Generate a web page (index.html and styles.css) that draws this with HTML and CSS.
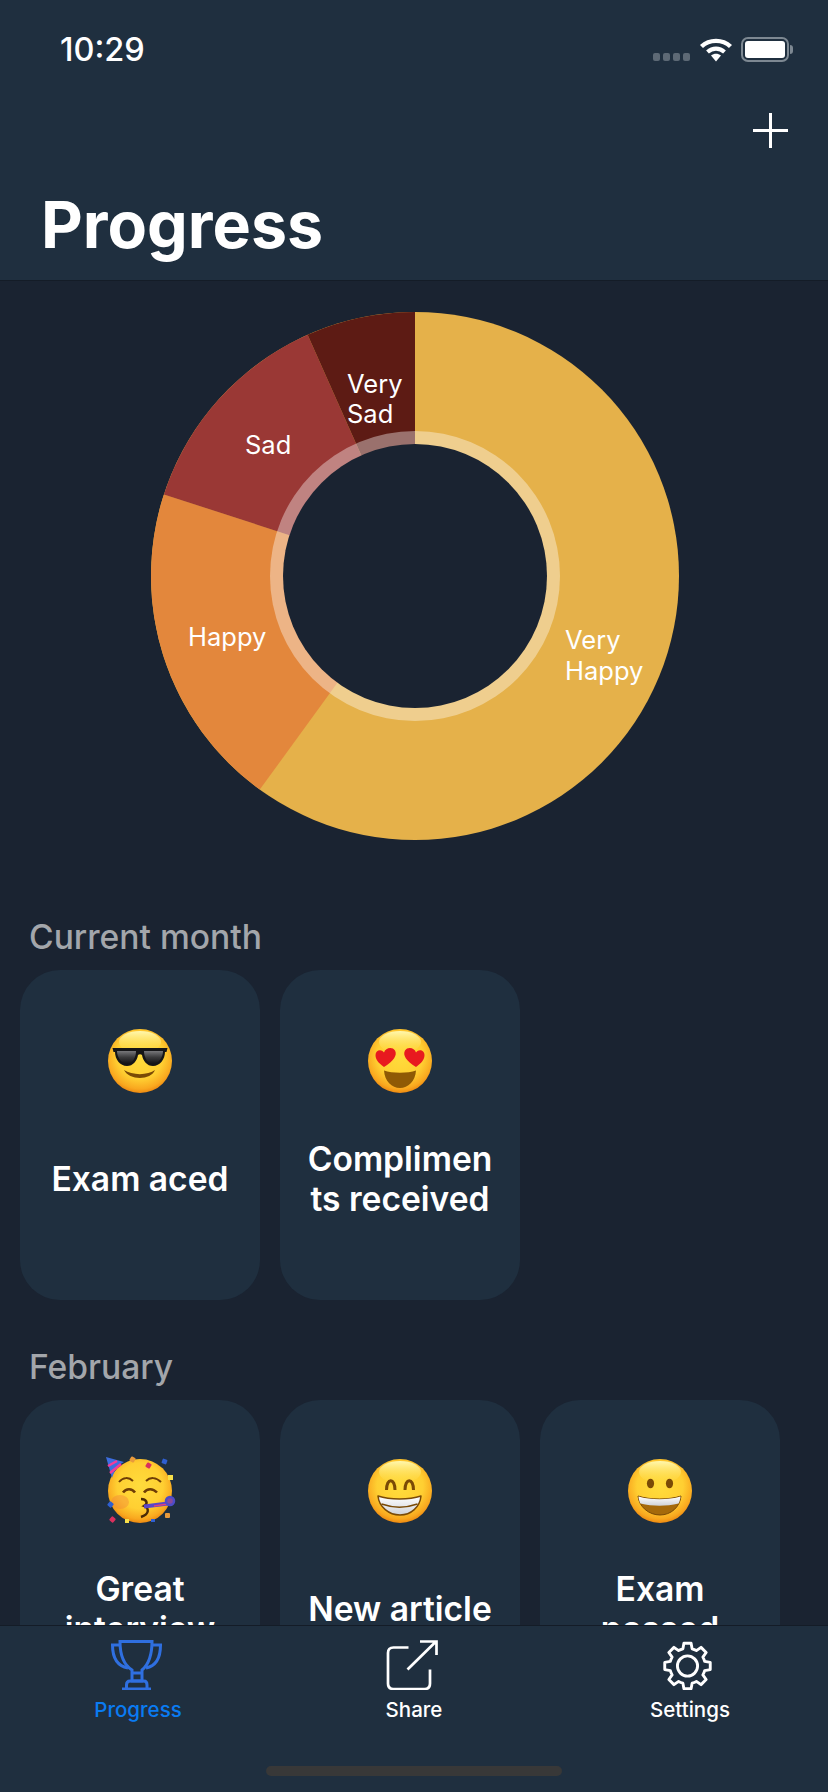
FILE: index.html
```html
<!DOCTYPE html>
<html lang="en">

<head>
    <meta charset="UTF-8">
    <meta name="viewport" content="width=device-width, initial-scale=1.0">
    <title>Progress</title>
    <link rel="stylesheet" href="styles.css">
</head>

<body>
    <header class="top-bar">
        <div class="status-bar">
            <span class="clock">10:29</span>
            <div class="status-icons">
                <div class="signal"><span></span><span></span><span></span><span></span></div>
                <svg class="wifi" width="34" height="25" viewBox="0 0 34 25">
                    <path d="M2.5 9.5C10.5 2 23.5 2 31.5 9.5" fill="none" stroke="#fff" stroke-width="4.4" />
                    <path d="M8.5 15C13.5 10.6 20.5 10.6 25.5 15" fill="none" stroke="#fff" stroke-width="4.2" />
                    <path d="M12 18.5C15 16.2 19 16.2 22 18.5L17 24.5Z" fill="#fff" />
                </svg>
                <div class="battery">
                    <div class="battery-level"></div>
                </div>
            </div>
        </div>
        <div class="action-row">
            <svg width="35" height="35" viewBox="0 0 35 35">
                <path d="M17.5 0V35M0 17.5H35" stroke="#fff" stroke-width="3" />
            </svg>
        </div>
        <h1>Progress</h1>
    </header>

    <main>
        <section class="chart">
            <svg width="528" height="528" viewBox="-264 -264 528 528">
                <circle r="264" fill="#e5b14a" />
                <path d="M0 0L-155.2 213.6A264 264 0 0 1 -251.1 -81.6Z" fill="#e3873c" />
                <path d="M0 0L-251.1 -81.6A264 264 0 0 1 -107.4 -241.2Z" fill="#9a3835" />
                <path d="M0 0L-107.4 -241.2A264 264 0 0 1 0 -264Z" fill="#5d1b14" />
                <circle r="145" fill="#fff" fill-opacity="0.38" />
                <circle r="132" fill="#1a2331" />
                <text class="chart-label" x="150" y="73">Very</text>
                <text class="chart-label" x="150" y="104">Happy</text>
                <text class="chart-label" x="-227" y="70">Happy</text>
                <text class="chart-label" x="-170" y="-122">Sad</text>
                <text class="chart-label" x="-68" y="-183">Very</text>
                <text class="chart-label" x="-68" y="-153">Sad</text>
            </svg>
        </section>

        <section class="month">
            <h2>Current month</h2>
            <div class="card-row">
                <div class="card">
                    <svg class="emoji" width="64" height="64" viewBox="0 0 64 64">
                        <defs>
                            <radialGradient id="face" cx="50%" cy="42%" r="60%">
                                <stop offset="0" stop-color="#ffdc3c" />
                                <stop offset="0.6" stop-color="#ffcf32" />
                                <stop offset="0.86" stop-color="#f9a81f" />
                                <stop offset="1" stop-color="#ea7f0c" />
                            </radialGradient>
                            <linearGradient id="shine" x1="0" y1="0" x2="0" y2="1">
                                <stop offset="0" stop-color="#fff8b0" />
                                <stop offset="1" stop-color="#ffe45c" stop-opacity="0" />
                            </linearGradient>
                            <linearGradient id="lens" x1="0" y1="0" x2="0" y2="1">
                                <stop offset="0" stop-color="#77777a" />
                                <stop offset="0.5" stop-color="#3a3a3c" />
                                <stop offset="1" stop-color="#141416" />
                            </linearGradient>
                            <linearGradient id="teeth" x1="0" y1="0" x2="0" y2="1">
                                <stop offset="0" stop-color="#fff" />
                                <stop offset="1" stop-color="#cfd2d8" />
                            </linearGradient>
                        </defs>
                        <circle cx="32" cy="32" r="32" fill="url(#face)" />
                        <ellipse cx="32" cy="13" rx="21" ry="11" fill="url(#shine)" />
                        <path d="M4.500 19H59.500L58.500 23H57C57 30 52 37 45 37C39 37 35 32 34 26C33 25 31 25 30 26C29 32 25 37 19 37C12 37 7 30 7 23H5.500Z" fill="#151517" />
                        <path d="M9 22H28C28 28 25 34.500 19 34.500C13 34.500 9 28 9 22ZM36 22H55C55 28 51 34.500 45 34.500C39 34.500 36 28 36 22Z" fill="url(#lens)" />
                        <path d="M16 41C24 46.500 40 46.500 47 41C43 51.500 21 51.500 16 41Z" fill="#7a4a06" />
                    </svg>
                    <div class="card-title">Exam aced</div>
                </div>
                <div class="card">
                    <svg class="emoji" width="64" height="64" viewBox="0 0 64 64">
                        <circle cx="32" cy="32" r="32" fill="url(#face)" />
                        <ellipse cx="32" cy="13" rx="21" ry="11" fill="url(#shine)" />
                        <path d="M16 38C10.500 34 7.500 30.500 7.500 26C7.500 21.500 13 19.500 16 23.500C17.500 18.500 24.500 17.500 27 21.500C29.500 26 26 32 16 38Z" fill="#e8191f" />
                        <path d="M48 38C38 32 34.500 26 37 21.500C39.500 17.500 46.500 18.500 48 23.500C51 19.500 56.500 21.500 56.500 26C56.500 30.500 53.500 34 48 38Z" fill="#e8191f" />
                        <path d="M16 41.500C24 44.500 40 44.500 48 41.500C47.500 52 40 59 32 59C24 59 16.500 52 16 41.500Z" fill="#8f5a05" />
                    </svg>
                    <div class="card-title">Compliments received</div>
                </div>
            </div>
        </section>

        <section class="month">
            <h2>February</h2>
            <div class="card-row">
                <div class="card">
                    <svg class="emoji party" width="76" height="72" viewBox="-6 -4 76 72">
                        <circle cx="32" cy="32" r="32" fill="url(#face)" />
                        <ellipse cx="12" cy="43" rx="9" ry="7" fill="#f28a3a" fill-opacity="0.45" />
                        <path d="M-2 -2L16 3C10 6 6 12 4 19Z" fill="#3d6ee0" />
                        <path d="M0 7L9 2M2 14L13 5" stroke="#f23c9a" stroke-width="2.500" fill="none" />
                        <rect x="22" y="-2" width="5" height="5" rx="1" fill="#e89a3c" transform="rotate(30 24.500 0.500)" />
                        <rect x="38" y="4" width="5" height="5" rx="1" fill="#d9305e" transform="rotate(30 40.500 6.500)" />
                        <rect x="54" y="0" width="5" height="5" rx="1" fill="#2f5fd0" transform="rotate(20 56.500 2.500)" />
                        <rect x="60" y="16" width="5" height="5" fill="#f7e04a" />
                        <rect x="0" y="43" width="5" height="5" rx="1" fill="#2f5fd0" transform="rotate(40 2.500 45.500)" />
                        <rect x="2" y="58" width="5" height="5" rx="1" fill="#d9305e" transform="rotate(40 4.500 60.500)" />
                        <rect x="17" y="60" width="4" height="4" fill="#f7e04a" />
                        <rect x="43" y="60" width="4" height="3" fill="#2f5fd0" />
                        <rect x="57" y="54" width="5" height="5" rx="1" fill="#e89a3c" />
                        <path d="M11 23C15 18 21 18 25 22M38 22C42 18 48 18 53 23" fill="none" stroke="#6e3d06" stroke-width="2" />
                        <path d="M15 33.500C18 29 24 29 27 33.500M36 33.500C39 29 45 29 49 33.500" fill="none" stroke="#6e3d06" stroke-width="2.500" />
                        <path d="M33 40C38 40 41 44 36 47C41 49 42 55 33 58" fill="none" stroke="#4a2a06" stroke-width="2.400" />
                        <path d="M36 47.500L60 44.500" stroke="#5b46c8" stroke-width="4" />
                        <path d="M46 47L60 45" stroke="#e0407c" stroke-width="1.500" />
                        <circle cx="62" cy="42" r="4" fill="#8a4a9c" stroke="#4d4cc8" stroke-width="2.500" />
                    </svg>
                    <div class="card-title">Great interview</div>
                </div>
                <div class="card">
                    <svg class="emoji" width="64" height="64" viewBox="0 0 64 64">
                        <circle cx="32" cy="32" r="32" fill="url(#face)" />
                        <ellipse cx="32" cy="13" rx="21" ry="11" fill="url(#shine)" />
                        <path d="M18.500 31C18.500 18.500 27 18.500 27 31M37 31C37 18.500 45.500 18.500 45.500 31" fill="none" stroke="#7a4a06" stroke-width="3" />
                        <path d="M10 37C22 41 41 41 53 37C52 48 43 56 32 56C21 56 11 48 10 37Z" fill="url(#teeth)" stroke="#7a4a06" stroke-width="1.500" stroke-linejoin="round" />
                        <path d="M13.500 45C25 49 38 49 49.500 45" fill="none" stroke="#7a4a06" stroke-width="1.500" />
                    </svg>
                    <div class="card-title">New article</div>
                </div>
                <div class="card">
                    <svg class="emoji" width="64" height="64" viewBox="0 0 64 64">
                        <circle cx="32" cy="32" r="32" fill="url(#face)" />
                        <ellipse cx="32" cy="13" rx="21" ry="11" fill="url(#shine)" />
                        <ellipse cx="22.500" cy="24.500" rx="3.600" ry="4.800" fill="#7a4a06" />
                        <ellipse cx="41.500" cy="24.500" rx="3.600" ry="4.800" fill="#7a4a06" />
                        <path d="M10 37C22 41 41 41 53 37C52 48 43 56 32 56C21 56 11 48 10 37Z" fill="#a66a0b" stroke="#7a4a06" stroke-width="1" />
                        <path d="M10.500 37.500C22 41 41 41 52.500 37.500C52.200 40.500 51.500 43 50.500 44.500C38 47.500 25 47.500 12.500 44.500C11.500 43 10.800 40.500 10.500 37.500Z" fill="url(#teeth)" />
                    </svg>
                    <div class="card-title">Exam passed</div>
                </div>
            </div>
        </section>
    </main>

    <footer class="tab-bar">
        <nav class="tabs">
            <div class="tab active">
                <svg width="60" height="50" viewBox="0 0 60 50" fill="none" stroke="#2f6fe0" stroke-width="3">
                    <path d="M12 1.500H44C44 16 40 25 34 30V41H24V30C16 25 12 16 12 1.500Z" />
                    <path d="M12 5H4.500C4.500 17 9 26 20 28M44 5H52.500C52.500 17 48 26 38 28" />
                    <path d="M24 33H34" />
                    <path d="M18.500 49V45C18.500 42.500 20 41 22 41H36C38 41 39 42.500 39 45V49M14 49H43" />
                </svg>
                <span>Progress</span>
            </div>
            <div class="tab">
                <svg width="60" height="50" viewBox="0 0 60 50" fill="none" stroke="#fff" stroke-width="2.700">
                    <path d="M24.500 7.500H9.500C6 7.500 4 9.500 4 13V43.500C4 47 6 49 9.500 49H40.500C44 49 46 47 46 43.500V29.500" />
                    <path d="M23.500 29.500L52 1.500M36 1.500H52.500V15" />
                </svg>
                <span>Share</span>
            </div>
            <div class="tab">
                <svg width="60" height="50" viewBox="0 0 60 50" fill="none" stroke="#fff" stroke-width="3" stroke-linejoin="round">
                    <g transform="translate(27.500 26) scale(0.96)">
                        <path d="M-3.750 -23.700L3.750 -23.700L4.790 -17.870A18.500 18.500 0 0 1 9.250 -16.020L14.100 -19.420L19.420 -14.100L16.020 -9.250A18.500 18.500 0 0 1 17.870 -4.790L23.700 -3.750L23.700 3.750L17.870 4.790A18.500 18.500 0 0 1 16.020 9.250L19.420 14.100L14.100 19.420L9.250 16.020A18.500 18.500 0 0 1 4.790 17.870L3.750 23.700L-3.750 23.700L-4.790 17.870A18.500 18.500 0 0 1 -9.250 16.020L-14.100 19.420L-19.420 14.100L-16.020 9.250A18.500 18.500 0 0 1 -17.870 4.790L-23.700 3.750L-23.700 -3.750L-17.870 -4.790A18.500 18.500 0 0 1 -16.020 -9.250L-19.420 -14.100L-14.100 -19.420L-9.250 -16.020A18.500 18.500 0 0 1 -4.790 -17.870Z" />
                        <circle r="10.500" />
                    </g>
                </svg>
                <span>Settings</span>
            </div>
        </nav>
        <div class="home-bar"></div>
    </footer>
</body>

</html>
```

FILE: styles.css
```css
body {
    font-family: 'Inter', 'Roboto', sans-serif;
    background-color: #1a2331;
    color: #fff;
    display: flex;
    flex-direction: column;
    width: 828px;
    height: 1792px;
    margin: 0;
    overflow: hidden;
}

/* top */
.top-bar {
    flex: none;
    height: 280px;
    background-color: #1f2f3f;
    border-bottom: 1px solid #141c27;
}

.status-bar {
    display: flex;
    justify-content: space-between;
    height: 76px;
    padding: 0 39px 0 60px;
}

.clock {
    font-size: 32.5px;
    font-weight: 500;
    line-height: 37px;
    margin-top: 31px;
}

.status-icons {
    display: flex;
    align-items: flex-start;
    padding-top: 37px;
}

.signal {
    display: flex;
    gap: 3px;
    margin-top: 16px;
    margin-right: 9px;
}

.signal span {
    width: 7px;
    height: 8px;
    border-radius: 2px;
    background-color: #5d6975;
}

.wifi {
    margin-right: 8px;
}

.battery {
    position: relative;
    box-sizing: border-box;
    width: 48px;
    height: 25px;
    border: 2px solid #7d8892;
    border-radius: 7px;
    padding: 2px;
}

.battery::after {
    content: "";
    position: absolute;
    right: -6px;
    top: 6px;
    width: 3px;
    height: 9px;
    border-radius: 0 3px 3px 0;
    background-color: #7d8892;
}

.battery-level {
    height: 100%;
    border-radius: 3px;
    background-color: #fff;
}

.action-row {
    display: flex;
    justify-content: flex-end;
    padding: 37px 40px 0 0;
    height: 35px;
}

h1 {
    font-size: 64.5px;
    font-weight: 700;
    line-height: 76px;
    margin: 39px 0 0 41px;
}

/* chart */
main {
    flex: 1;
    min-height: 0;
    overflow: hidden;
}

.chart {
    display: flex;
    justify-content: center;
    padding: 31px 0 0 2px;
    height: 528px;
}

.chart svg {
    display: block;
}

.chart-label {
    font-size: 25.5px;
    fill: #fff;
}

/* months */
.month {
    height: 430px;
}

.chart + .month {
    padding-top: 77px;
}

h2 {
    font-size: 33.6px;
    font-weight: 500;
    line-height: 40px;
    color: #a3a6ab;
    margin: 0 0 13px 29px;
}

.card-row {
    display: flex;
    gap: 20px;
    padding-left: 20px;
}

.card {
    box-sizing: border-box;
    display: flex;
    flex-direction: column;
    align-items: center;
    width: 240px;
    height: 330px;
    padding: 59px 25px 35px;
    border-radius: 40px;
    background-color: #1f2f3f;
}

.emoji {
    flex: none;
    display: block;
}

.emoji.party {
    margin: -4px 0;
}

.card-title {
    flex: 1;
    display: flex;
    align-items: center;
    justify-content: center;
    text-align: center;
    width: 100%;
    font-size: 33.6px;
    font-weight: 600;
    line-height: 40px;
    overflow-wrap: anywhere;
}

/* tabs */
.tab-bar {
    flex: none;
    height: 166px;
    background-color: #1f2f3f;
    border-top: 1px solid #141c27;
    display: flex;
    flex-direction: column;
    align-items: center;
}

.tabs {
    display: grid;
    grid-template-columns: repeat(3, 1fr);
    width: 100%;
    padding-top: 14px;
}

.tab {
    display: flex;
    flex-direction: column;
    align-items: center;
    gap: 7px;
    font-size: 20.5px;
    font-weight: 500;
}

.tab svg {
    display: block;
}

.tab.active span {
    color: #0a7bf2;
}

.home-bar {
    width: 296px;
    height: 10px;
    margin-top: 44px;
    border-radius: 5px;
    background-color: #383838;
}
```
